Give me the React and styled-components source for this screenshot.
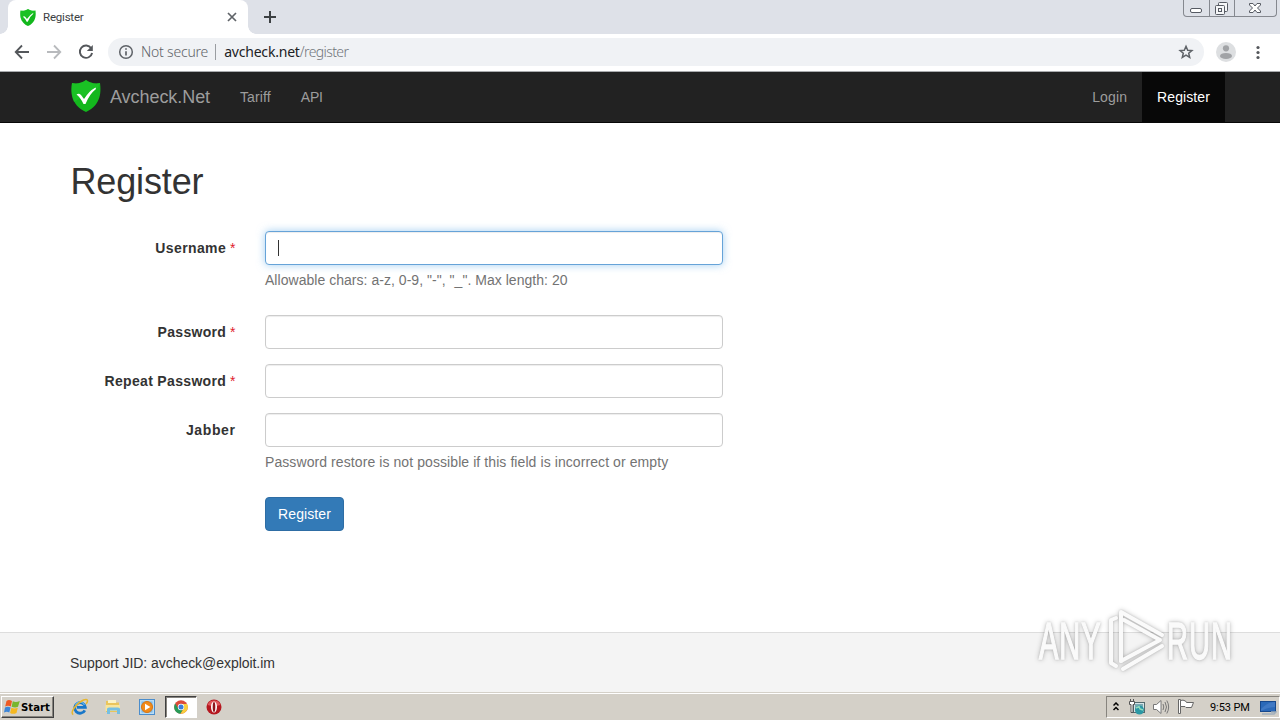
import React from 'react';
import styled, { createGlobalStyle, css } from 'styled-components';

const GlobalStyle = createGlobalStyle`
  * { box-sizing: border-box; }
  body { margin: 0; overflow: hidden; font-family: "Liberation Sans", Arial, sans-serif; font-size: 14px; color: #333; }
  svg { display: block; flex: none; }
`;

const Screen = styled.div`
  position: relative;
  display: flex;
  flex-direction: column;
  width: 1280px;
  height: 720px;
  overflow: hidden;
  background: #fff;
`;

const Label = styled.span`
  white-space: nowrap;
  letter-spacing: ${(p) => p.$track || 0}px;
`;

/* Browser frame */
const TabStrip = styled.header`
  display: flex;
  flex: none;
  height: 34px;
  padding-left: 8px;
  background: #dee1e8;
`;
const Tab = styled.div`
  position: relative;
  display: flex;
  align-items: center;
  width: 240px;
  height: 34px;
  padding: 0 10px 0 12px;
  gap: 7px;
  background: #fff;
  border-radius: 8px 8px 0 0;
  font: 11px/14px "DejaVu Sans", sans-serif;
  color: #3c4043;
  &::before, &::after {
    content: "";
    position: absolute;
    bottom: 0;
    width: 8px;
    height: 8px;
  }
  &::before { left: -8px; background: radial-gradient(circle at 0 0, transparent 7.5px, #fff 8px); }
  &::after { right: -8px; background: radial-gradient(circle at 100% 0, transparent 7.5px, #fff 8px); }
  ${Label} { flex: 1; font-family: Roboto, sans-serif; font-size: 11.5px; }
`;
const NewTab = styled.div`
  padding: 11px 0 0 16px;
`;
const WindowButtons = styled.div`
  display: flex;
  width: 94px;
  height: 17px;
  margin: 0 3px 0 auto;
  border: 1px solid #85888f;
  border-top: 0;
  border-radius: 0 0 4px 4px;
`;
const WindowButton = styled.div`
  display: flex;
  justify-content: center;
  width: ${(p) => p.$w}px;
  & + & { border-left: 1px solid #85888f; }
`;
const Toolbar = styled.div`
  display: flex;
  flex: none;
  align-items: center;
  height: 38px;
  padding: 0 8px 1px 14px;
  border-bottom: 1px solid #a9abae;
`;
const NavIcons = styled.div`
  display: flex;
  flex: none;
  gap: 16px;
  width: 94px;
`;
const AddressBar = styled.div`
  display: flex;
  flex: none;
  align-items: center;
  width: 1096px;
  height: 28px;
  padding: 0 10px;
  border-radius: 14px;
  background: #f0f2f5;
  font-family: "Noto Sans", sans-serif;
  font-weight: 300;
  line-height: 18px;
  color: #5f6368;
  span { margin-top: -1px; }
`;
const Divider = styled.i`
  width: 1px;
  height: 16px;
  margin: 0 8px 0 7px;
  background: #9a9da1;
`;
const Security = styled(Label)`
  margin-left: 7px;
`;
const UrlHost = styled(Label)`
  color: #202124;
  font-weight: 400;
`;
const UrlPath = styled(Label)`
  flex: 1;
  color: #70757b;
`;
const ToolbarEnd = styled.div`
  display: flex;
  align-items: center;
  gap: 9px;
  margin-left: 12px;
`;

/* Site */
const Navbar = styled.nav`
  display: flex;
  flex: none;
  height: 51px;
  padding: 0 55px 0 70px;
  background: #222;
  border-bottom: 1px solid #080808;
  color: #9d9d9d;
  line-height: 50px;
`;
const Brand = styled.div`
  display: flex;
  align-items: center;
  width: 155px;
  gap: 8px;
  font-size: 18px;
  svg { margin-top: -2px; }
`;
const NavItem = styled.div`
  padding: 0 15px;
  ${(p) => p.$active && css`background: #080808; color: #fff;`}
  ${(p) => p.$first && css`margin-left: auto;`}
`;
const Main = styled.main`
  flex: 1;
  padding: 39px 70px 0;
`;
const Title = styled.h1`
  margin: 0 0 29px;
  padding-left: 0.5px;
  font-size: 36px;
  font-weight: 400;
  line-height: 40px;
`;
const Row = styled.div`
  display: grid;
  grid-template-columns: 165.5px 458px;
  column-gap: 29.5px;
  margin-bottom: ${(p) => p.$gap || 15}px;
`;
const FieldLabel = styled.label`
  padding-top: 7px;
  text-align: right;
  font-weight: 700;
  line-height: 20px;
  white-space: nowrap;
`;
const Required = styled.span`
  color: #e01b2c;
  font-weight: 400;
`;
const Input = styled.div`
  display: flex;
  align-items: center;
  height: 34px;
  padding-left: 12px;
  border: 1px solid ${(p) => (p.$focus ? '#66a3d8' : '#ccc')};
  border-radius: 4px;
  background: #fff;
  box-shadow: ${(p) => (p.$focus ? 'inset 0 1px 1px rgba(0,0,0,.075), 0 0 8px rgba(102,175,233,.6)' : 'inset 0 1px 1px rgba(0,0,0,.075)')};
`;
const Caret = styled.i`
  width: 1px;
  height: 16px;
  background: #333;
`;
const Help = styled.div`
  margin-top: 5px;
  color: #737373;
  line-height: 20px;
`;
const Submit = styled.button`
  grid-column: 2;
  width: 79px;
  height: 34px;
  padding: 0;
  border: 1px solid #2e6da4;
  border-radius: 4px;
  background: #337ab7;
  color: #fff;
  font: inherit;
`;
const Footer = styled.footer`
  flex: none;
  height: 60px;
  padding: 20px 70px;
  border-top: 1px solid #ddd;
  background: #f4f4f4;
  line-height: 20px;
`;
const Watermark = styled.div`
  position: absolute;
  left: 1030px;
  top: 600px;
  svg { filter: drop-shadow(0 0 1px rgba(0,0,0,.14)) drop-shadow(0 0 2.5px rgba(0,0,0,.24)); }
`;

/* Taskbar */
const Taskbar = styled.div`
  display: flex;
  flex: none;
  align-items: center;
  height: 28px;
  padding: 3px 0 1px 1px;
  background: #d4d0c8;
  box-shadow: inset 0 1px #d4d0c8, inset 0 2px #fff;
  color: #000;
`;
const Start = styled.div`
  display: flex;
  align-items: center;
  width: 53px;
  height: 22px;
  padding-left: 2px;
  gap: 1px;
  border: 1px solid;
  border-color: #fff #404040 #404040 #fff;
  box-shadow: inset -1px -1px #87847e;
  font: bold 11.3px "DejaVu Sans Condensed", "DejaVu Sans", sans-serif;
`;
const Launchers = styled.div`
  display: flex;
  align-items: center;
  margin-left: 9px;
`;
const Launcher = styled.div`
  display: flex;
  align-items: center;
  justify-content: center;
  width: ${(p) => (p.$active ? 32 : 33.5)}px;
  height: 22px;
  ${(p) => p.$active && css`
    margin: 0 1px;
    border: 1px solid;
    border-color: #404040 #fff #fff #404040;
    background: #fff;
    box-shadow: inset 1px 1px #87847e;
  `}
`;
const Tray = styled.div`
  display: flex;
  align-items: center;
  width: 174px;
  height: 22px;
  margin-left: auto;
  padding: 0 2px 0 6px;
  border: 1px solid;
  border-color: #87847e #fff #fff #87847e;
  font: 11px Roboto, sans-serif;
`;
const TrayIcons = styled.div`
  display: flex;
  align-items: center;
  gap: 6px;
  margin-left: 9px;
`;
const Clock = styled(Label)`
  width: 40px;
  margin: 0 10px 0 14px;
`;

const Shield = ({ w, h }) => (
  <svg width={w} height={h} viewBox="0 0 30 32">
    <path d="M15 0C11 3 6 4 1 3C0 10-1 25 15 32C31 25 30 10 29 3C24 4 19 3 15 0Z" fill="#13b71d" />
    <path d="M15 0C11 3 6 4 1 3C0 9 0 16 3 22L27 8L29 3C24 4 19 3 15 0Z" fill="#22cc2b" opacity=".5" />
    <path d="M5.500 14.500Q8 13 10 15L13 19Q18 11 24.500 7.500L25 9Q18.500 14 14.500 24H12.500Q9.500 17.500 5.500 14.500Z" fill="#fff" />
  </svg>
);
const BackArrow = ({ color, flip }) => (
  <svg width="16" height="16" viewBox="0 0 16 16" transform={flip ? 'scale(-1 1)' : undefined}>
    <path d="M15 8H2M8 1.5L1.7 8L8 14.5" fill="none" stroke={color} strokeWidth="1.8" />
  </svg>
);
const Reload = () => (
  <svg width="16" height="16" viewBox="0 0 16 16">
    <path d="M13.2 4.2A6.2 6.2 0 1 0 14.1 9" fill="none" stroke="#54575b" strokeWidth="1.9" />
    <path d="M14.8 1V7H8.8Z" fill="#54575b" />
  </svg>
);
const Info = () => (
  <svg width="16" height="16" viewBox="0 0 16 16">
    <circle cx="8" cy="8" r="6.3" fill="none" stroke="#5f6368" strokeWidth="1.5" />
    <path d="M8 7.2V11.5M8 4.2V5.8" stroke="#5f6368" strokeWidth="1.7" />
  </svg>
);
const Star = () => (
  <svg width="16" height="16" viewBox="0 0 16 16">
    <path d="M8 2.300L9.700 6.200L13.900 6.600L10.700 9.300L11.700 13.400L8 11.200L4.300 13.400L5.300 9.300L2.100 6.600L6.300 6.200Z" fill="none" stroke="#5f6368" strokeWidth="1.5" />
  </svg>
);
const Avatar = () => (
  <svg width="20" height="20" viewBox="0 0 20 20">
    <circle cx="10" cy="10" r="10" fill="#dddfe1" />
    <circle cx="10" cy="6.3" r="3.1" fill="#a1a3a6" />
    <ellipse cx="10" cy="13.9" rx="6" ry="3" fill="#a1a3a6" />
  </svg>
);
const Menu = () => (
  <svg width="26" height="16" viewBox="0 0 26 16" fill="#54575b">
    <circle cx="13" cy="3.500" r="1.6" /><circle cx="13" cy="8.500" r="1.6" /><circle cx="13" cy="13.500" r="1.6" />
  </svg>
);
const WindowsFlag = () => (
  <svg width="16" height="16" viewBox="0 0 16 16">
    <path d="M2.5 2C4.500 .5 6 1 8 2L6.800 7.500C5 6.500 3 6.500 1.200 7.500Z" fill="#ee5a24" />
    <path d="M8.800 2.300C11 3.300 13 3.200 15.800 2L14 7.800C12 8.900 9.700 8.600 7.600 7.800Z" fill="#78b62e" />
    <path d="M1 8.400C3 7.300 5 7.500 6.600 8.400L5.300 13.500C3.500 12.500 2 12.500 0 13.500Z" fill="#3d86d8" />
    <path d="M7.400 8.700C9.500 9.800 11.500 9.700 13.800 8.700L12.500 14C10 15.300 8 15 6.100 14Z" fill="#f5b820" />
  </svg>
);
const Explorer = () => (
  <svg width="18" height="18" viewBox="0 0 18 18">
    <path d="M13.800 12.300A5.300 5.300 0 1 1 14.300 9.300H6" fill="none" stroke="#1977c9" strokeWidth="2.800" />
    <path d="M4.500 7A5 5 0 0 1 13.500 7" fill="none" stroke="#5ab2ec" strokeWidth="1.200" />
    <path d="M2.300 16.500C-1.500 15 5 5.500 12.500 2C17 .3 17.500 3 15 6" fill="none" stroke="#e7b62d" strokeWidth="1.500" />
  </svg>
);
const Folder = () => (
  <svg width="18" height="18" viewBox="0 0 18 18">
    <path d="M2 3H7L8.500 4.500H15V14H2Z" fill="#eac55b" />
    <path d="M4 2H12V5H4Z" fill="#fbf3c7" />
    <path d="M1.500 7H16V13H1.500Z" fill="#f8e59b" />
    <path d="M3 16V11Q3 9.500 5 9.500H14Q16 9.500 16 11V16H13V12.500H6V16Z" fill="#76bfe2" />
  </svg>
);
const Player = () => (
  <svg width="18" height="18" viewBox="0 0 18 18">
    <rect x="1.500" y="1.500" width="15" height="15" fill="#b8dcf5" stroke="#4b8dcc" />
    <rect x="3.500" y="3.500" width="11" height="11" fill="#79b5e6" />
    <circle cx="9" cy="9" r="5.500" fill="#f28a18" stroke="#d87511" />
    <path d="M7 5.700L12.400 9L7 12.300Z" fill="#fff" />
  </svg>
);
const Chrome = () => (
  <svg width="14" height="14" viewBox="0 0 14 14">
    <circle cx="7" cy="7" r="6.800" fill="#dd4b39" />
    <path d="M1.100 3.600A6.800 6.800 0 0 0 6.500 13.800L9.600 8.500L7 7L4.300 8.500Z" fill="#279b58" />
    <path d="M7 4H13.100A6.800 6.800 0 0 1 6.500 13.800L9.700 8.500Z" fill="#f9cf3d" />
    <circle cx="7" cy="7" r="3.200" fill="#fff" /><circle cx="7" cy="7" r="2.500" fill="#3b7ddb" />
  </svg>
);
const Opera = () => (
  <svg width="16" height="16" viewBox="0 0 16 16">
    <circle cx="8" cy="8" r="7.500" fill="#b51820" />
    <path d="M1.500 6A7 7 0 0 1 14.500 6Q8 8 1.500 6Z" fill="#e0575b" />
    <ellipse cx="8" cy="8" rx="3" ry="5.500" fill="#fff" />
    <ellipse cx="8" cy="8" rx="1.300" ry="5" fill="#8e151b" />
  </svg>
);
const Network = () => (
  <svg width="18" height="18" viewBox="0 0 18 18">
    <rect x="5.500" y="4.500" width="11" height="10" fill="#d7e5e7" stroke="#53696d" />
    <rect x="7" y="6" width="8" height="7" fill="#7aaab3" />
    <circle cx="11.500" cy="12" r="4.500" fill="#2b98a4" />
    <path d="M8 10L11 8.500L12 11L15 12" fill="none" stroke="#93dabd" strokeWidth="1.500" />
    <path d="M2.500 1V4M5.500 1V4M1.500 3.500H6.500V6.500H5V14.500H3V6.500H1.500Z" fill="#fff" stroke="#555" />
  </svg>
);
const Volume = () => (
  <svg width="20" height="18" viewBox="0 0 20 18" fill="none" stroke="#777">
    <path d="M1.500 6.500H4.500L9 2.500V15.500L4.500 11.500H1.500Z" fill="#fff" />
    <path d="M11 6Q12.500 9 11 12M13 4Q16 9 13 14M14.800 2.500Q18.500 9 14.800 15.500" />
  </svg>
);
const Flag = () => (
  <svg width="18" height="18" viewBox="0 0 18 18">
    <path d="M.5 1.500H2.500V15.500H.5Z" fill="#fff" stroke="#666" />
    <path d="M2.500 2.500Q5 1.500 7.500 3L8.500 4.500H15.500L13.500 9.500H8L7 8.500H2.500Z" fill="#fff" stroke="#666" />
  </svg>
);
const Desktop = () => (
  <svg width="17" height="16" viewBox="0 0 17 16">
    <rect x=".5" y="2.500" width="15" height="10" fill="#2b69b8" stroke="#17488c" />
    <path d="M1 10Q8 3 15 3V8Q8 8 1 12Z" fill="#4079c4" />
    <path d="M2 15H14L16 13H11" fill="none" stroke="#a0afbc" strokeWidth="1.500" />
  </svg>
);

const fields = [
  { label: 'Username', track: 0.4, required: true, focus: true, help: 'Allowable chars: a-z, 0-9, "-", "_". Max length: 20', helpTrack: 0.035, gap: 25 },
  { label: 'Password', track: 0.3, required: true },
  { label: 'Repeat Password', track: 0.33, required: true },
  { label: 'Jabber', track: 0.6, help: 'Password restore is not possible if this field is incorrect or empty', helpTrack: 0.083, gap: 25 },
];

export default function App() {
  return (
    <Screen>
      <GlobalStyle />
      <TabStrip>
        <Tab>
          <Shield w={16} h={17} />
          <Label $track={-0.2}>Register</Label>
          <svg width="12" height="12" viewBox="0 0 12 12"><path d="M2 2L10 10M10 2L2 10" stroke="#5f6368" strokeWidth="1.7" /></svg>
        </Tab>
        <NewTab>
          <svg width="12" height="12" viewBox="0 0 12 12"><path d="M6 0V12M0 6H12" stroke="#3c4043" strokeWidth="2" /></svg>
        </NewTab>
        <WindowButtons>
          <WindowButton $w={25}><svg width="24" height="16"><rect x="6.500" y="8.500" width="11" height="4" rx="1.500" fill="#fff" stroke="#565a63" /></svg></WindowButton>
          <WindowButton $w={25}>
            <svg width="24" height="16" fill="#f5f6f8" stroke="#565a63"><rect x="8.500" y="2.500" width="9" height="9" rx="1" /><rect x="5.500" y="5.500" width="9" height="9" rx="1" /><rect x="8.500" y="8.500" width="3" height="3" /></svg>
          </WindowButton>
          <WindowButton $w={43}>
            <svg width="24" height="16"><path d="M6.500 3.500H10L12 6L14 3.500H17.500V5L14.500 8L17.500 11V12.500H14L12 10L10 12.500H6.500V11L9.500 8L6.500 5Z" fill="#fff" stroke="#565a63" /></svg>
          </WindowButton>
        </WindowButtons>
      </TabStrip>
      <Toolbar>
        <NavIcons><BackArrow color="#54575b" /><BackArrow color="#b8babd" flip /><Reload /></NavIcons>
        <AddressBar>
          <Info />
          <Security $track={-0.2}>Not secure</Security>
          <Divider />
          <UrlHost $track={-0.2}>avcheck.net</UrlHost>
          <UrlPath $track={-0.6}>/register</UrlPath>
          <Star />
        </AddressBar>
        <ToolbarEnd><Avatar /><Menu /></ToolbarEnd>
      </Toolbar>

      <Navbar>
        <Brand><Shield w={32} h={32} /><Label $track={-0.06}>Avcheck.Net</Label></Brand>
        <NavItem><Label $track={0.12}>Tariff</Label></NavItem>
        <NavItem><Label $track={-0.2}>API</Label></NavItem>
        <NavItem $first><Label $track={0.12}>Login</Label></NavItem>
        <NavItem $active><Label $track={0.1}>Register</Label></NavItem>
      </Navbar>
      <Main>
        <Title><Label $track={-0.15}>Register</Label></Title>
        {fields.map((f) => (
          <Row key={f.label} $gap={f.gap}>
            <FieldLabel>
              <Label $track={f.track}>{f.label}</Label>
              {f.required && <Required> *</Required>}
            </FieldLabel>
            <div>
              <Input $focus={f.focus}>{f.focus && <Caret />}</Input>
              {f.help && <Help><Label $track={f.helpTrack}>{f.help}</Label></Help>}
            </div>
          </Row>
        ))}
        <Row><Submit><Label $track={0.1}>Register</Label></Submit></Row>
      </Main>
      <Footer><Label $track={-0.05}>Support JID: avcheck@exploit.im</Label></Footer>

      <Taskbar>
        <Start><WindowsFlag /><Label>Start</Label></Start>
        <Launchers>
          <Launcher><Explorer /></Launcher>
          <Launcher><Folder /></Launcher>
          <Launcher><Player /></Launcher>
          <Launcher $active><Chrome /></Launcher>
          <Launcher><Opera /></Launcher>
        </Launchers>
        <Tray>
          <svg width="6" height="10" viewBox="0 0 6 10"><path d="M.5 3.500L3 1L5.500 3.500M.5 8L3 5.500L5.500 8" fill="none" stroke="#000" strokeWidth="1.500" /></svg>
          <TrayIcons><Network /><Volume /><Flag /></TrayIcons>
          <Clock $track={-0.1}>9:53 PM</Clock>
          <Desktop />
        </Tray>
      </Taskbar>

      <Watermark>
        <svg width="214" height="85" viewBox="0 0 214 85">
          <g fill="#fafafa" stroke="#fafafa" strokeWidth="1.5" fontFamily="Liberation Sans, sans-serif" fontSize="51">
            <text x="0" y="0" transform="translate(9 59) scale(.57 1)" textLength="108">ANY</text>
            <text x="0" y="0" transform="translate(137 59) scale(.57 1)" textLength="114">RUN</text>
          </g>
          <g fill="none" stroke="#fafafa" strokeWidth="4" strokeLinejoin="round" strokeLinecap="round">
            <path d="M91 61V12L132 35" />
            <path d="M91 61L130 40L94 20" />
            <path d="M86 18L81 20V63L86 66" />
            <path d="M93 69L132 46" />
          </g>
        </svg>
      </Watermark>
    </Screen>
  );
}
